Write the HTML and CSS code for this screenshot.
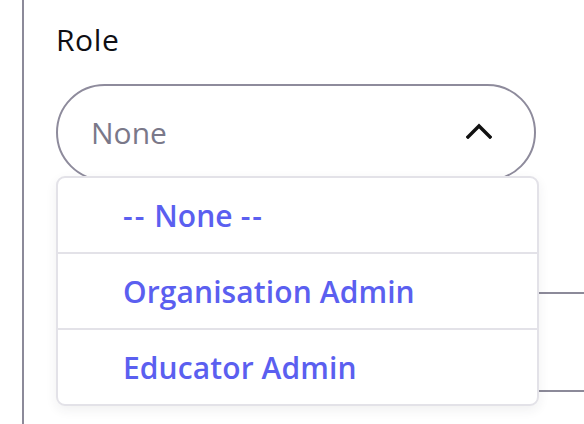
FILE: index.html
```html
<!DOCTYPE html>
<html lang="en">
<head>
<meta charset="utf-8">
<title>Role</title>
<link rel="stylesheet" href="styles.css">
</head>
<body>
<div class="panel">
  <label class="label">Role</label>
  <div class="select-wrap">
    <div class="select">
      <span class="placeholder">None</span>
      <svg class="chevron" width="26" height="16" viewBox="0 0 26 16" aria-hidden="true">
        <path d="M2 14 L13 3 L24 14" fill="none" stroke="#111" stroke-width="3.4" stroke-linecap="square" stroke-linejoin="miter"/>
      </svg>
    </div>
    <ul class="menu">
      <li class="option"><span class="dashes">--</span> None <span class="dashes">--</span></li>
      <li class="option">Organisation Admin</li>
      <li class="option">Educator Admin</li>
    </ul>
  </div>
  <div class="rule rule-first"></div>
  <div class="rule rule-second"></div>
</div>
</body>
</html>
```

FILE: styles.css
```css
html, body {
  margin: 0;
  padding: 0;
  background: #ffffff;
}

body {
  width: 584px;
  height: 424px;
  overflow: hidden;
  font-family: "Open Sans", "Noto Sans", sans-serif;
}

.panel {
  margin-left: 22px;
  border-left: 2px solid #8c8a99;
  padding-left: 32px;
  height: 424px;
  box-sizing: border-box;
  padding-top: 22px;
}

.label {
  display: block;
  font-size: 30px;
  line-height: 36px;
  font-weight: 500;
  letter-spacing: 0.6px;
  color: #0f0f14;
}

.select-wrap {
  position: relative;
  margin-top: 26px;
  width: 480px;
}

.select {
  box-sizing: border-box;
  height: 97px;
  border: 2px solid #8e8b9c;
  border-radius: 49px;
  display: flex;
  align-items: center;
  justify-content: space-between;
  padding-left: 33px;
  padding-right: 42px;
}

.placeholder {
  font-size: 30px;
  color: #7a7889;
  line-height: 1;
}

.chevron {
  display: block;
  margin-top: -4px;
}

.menu {
  position: absolute;
  top: 92px;
  left: 0;
  width: 483px;
  box-sizing: border-box;
  margin: 0;
  padding: 0;
  list-style: none;
  background: #ffffff;
  border: 2px solid #e3e2e8;
  border-radius: 9px;
  box-shadow: 0 4px 12px rgba(40, 40, 60, 0.07);
  z-index: 2;
}

.option {
  height: 74px;
  display: flex;
  align-items: center;
  padding-left: 65px;
  font-size: 30px;
  font-weight: 600;
  letter-spacing: 0.1px;
  color: #5b5ff0;
  white-space: pre;
}

.dashes {
  letter-spacing: 2px;
}

.option + .option {
  border-top: 2px solid #e3e2e8;
}

.rule {
  height: 2px;
  background: #8c8a99;
}

.rule-first {
  margin-top: 111px;
}

.rule-second {
  margin-top: 96px;
}
```
